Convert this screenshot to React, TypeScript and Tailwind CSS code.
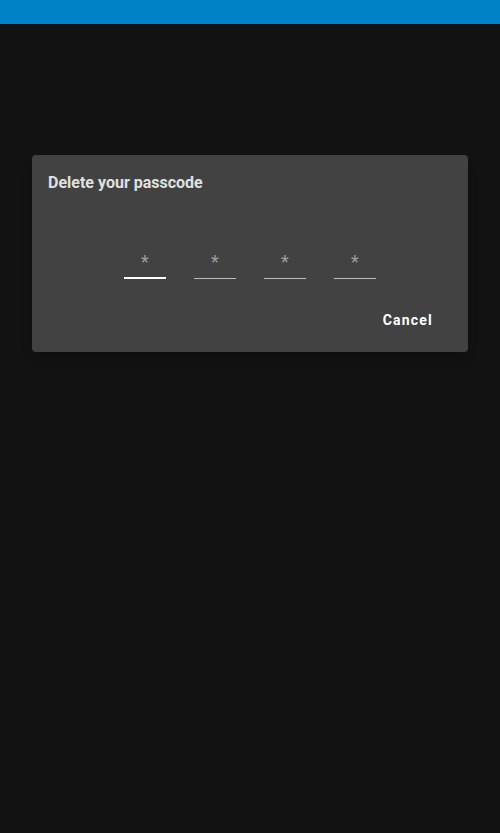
import React from "react";

export default function App() {
  const digits = [0, 1, 2, 3];

  return (
    <div className="min-h-[833px] bg-[#121212]" style={{ fontFamily: "Roboto, 'Liberation Sans', sans-serif" }}>
      <div className="h-6 bg-[#0082c8]" />

      <div className="pt-[131px] px-8">
        <div className="bg-[#424242] rounded shadow-lg">
          <h2 className="pt-[18px] px-4 text-base leading-5 font-bold text-[#e0e0e0]">Delete your passcode</h2>

          <div className="mt-[56px] flex justify-center gap-7">
            {digits.map((i) => (
              <div
                key={i}
                className={`w-[42px] h-[30px] flex items-start justify-center pt-[3px] text-[#9e9e9e] text-lg leading-5 ${
                  i === 0 ? "border-b-2 border-white" : "border-b border-[#bdbdbd] h-[29px]"
                }`}
              >
                *
              </div>
            ))}
          </div>

          <div className="flex justify-end pr-[27px] pt-[23px] pb-[14px]">
            <button className="px-2 py-2 text-sm leading-5 font-bold tracking-[1.2px] text-white">Cancel</button>
          </div>
        </div>
      </div>
    </div>
  );
}
